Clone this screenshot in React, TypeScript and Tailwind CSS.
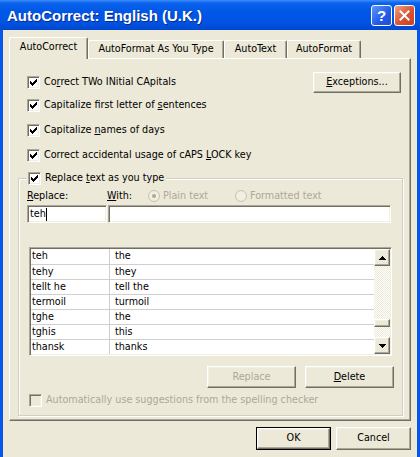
import React from 'react';

// classic 3D edges on the XP beige scheme
const raised =
  'border border-t-white border-l-white border-r-[#716F64] border-b-[#716F64] shadow-[inset_-1px_-1px_0_#ACA899,inset_1px_1px_0_#F1EFE2] bg-[#ECE9D8]';
const sunken =
  'border border-t-[#ACA899] border-l-[#ACA899] border-r-white border-b-white shadow-[inset_1px_1px_0_#716F64,inset_-1px_-1px_0_#F1EFE2]';

const Check: React.FC<{ checked?: boolean; disabled?: boolean }> = ({ checked = true, disabled = false }) => (
  <span className={`w-[13px] h-[13px] shrink-0 flex items-center justify-center ${sunken} ${disabled ? 'bg-[#ECE9D8]' : 'bg-white'}`}>
    {checked && (
      <svg width="7" height="7" viewBox="0 0 7 7" shapeRendering="crispEdges">
        <path
          d="M0 2h1v3H0z M1 3h1v3H1z M2 4h1v3H2z M3 3h1v3H3z M4 2h1v3H4z M5 1h1v3H5z M6 0h1v3H6z"
          fill={disabled ? '#ACA899' : '#000'}
        />
      </svg>
    )}
  </span>
);

const Radio: React.FC<{ on?: boolean }> = ({ on = false }) => (
  <span className="w-[12px] h-[12px] shrink-0 rounded-full border border-[#C5C2B2] bg-[#F1EFE2] flex items-center justify-center">
    {on && <span className="w-[4px] h-[4px] rounded-full bg-[#ACA899]" />}
  </span>
);

const U: React.FC<{ children: React.ReactNode }> = ({ children }) => <span className="underline">{children}</span>;

const rows: [string, string][] = [
  ['teh', 'the'],
  ['tehy', 'they'],
  ['tellt he', 'tell the'],
  ['termoil', 'turmoil'],
  ['tghe', 'the'],
  ['tghis', 'this'],
  ['thansk', 'thanks'],
];

const Arrow: React.FC<{ up?: boolean }> = ({ up }) => (
  <svg width="7" height="4" viewBox="0 0 7 4" shapeRendering="crispEdges">
    <path d={up ? 'M3 0h1v1H3z M2 1h3v1H2z M1 2h5v1H1z M0 3h7v1H0z' : 'M0 0h7v1H0z M1 1h5v1H1z M2 2h3v1H2z M3 3h1v1H3z'} fill="#000" />
  </svg>
);

const CheckRow: React.FC<{ children: React.ReactNode; h: string }> = ({ children, h }) => (
  <div className={`flex items-center gap-[4px] pl-[17px] ${h}`}>
    <Check />
    <span>{children}</span>
  </div>
);

const App: React.FC = () => {
  return (
    <div className="w-[420px] h-[457px] flex flex-col bg-[#0758EA] font-['DejaVu_Sans_Condensed','Liberation_Sans',Arial,sans-serif] text-[10.7px] leading-none text-black select-none">
      {/* Title bar */}
      <div className="h-[30px] shrink-0 flex items-center pl-[7px] pr-[5px] bg-[linear-gradient(to_bottom,#3D8EFB_0px,#0B62EC_3px,#0057E7_12px,#0054E3_22px,#0047D0_30px)]">
        <span className="flex-1 text-white font-bold text-[15px] font-['Liberation_Sans',Arial,sans-serif] [text-shadow:1px_1px_0_#0A2A8C]">
          AutoCorrect: English (U.K.)
        </span>
        <div className="flex gap-[2px]">
          <div className="w-[21px] h-[21px] rounded-[3px] border border-white bg-[linear-gradient(135deg,#5E97FA,#2359E6_60%,#1B4FD8)] flex items-center justify-center text-white font-bold text-[15px] font-['Liberation_Sans',Arial,sans-serif]">
            ?
          </div>
          <div className="w-[21px] h-[21px] rounded-[3px] border border-white bg-[linear-gradient(135deg,#F0A088,#DB5230_55%,#C9401F)] flex items-center justify-center">
            <svg width="11" height="11" viewBox="0 0 11 11">
              <path d="M1.5 1.5l8 8M9.5 1.5l-8 8" stroke="#fff" strokeWidth="2" strokeLinecap="square" />
            </svg>
          </div>
        </div>
      </div>

      {/* Body */}
      <div className="flex-1 mx-[3px] bg-[#ECE9D8] flex flex-col">
        {/* Tabs */}
        <div className="flex items-end h-[28px] pt-[7px] pl-[6px]">
          <div className="relative z-10 w-[79px] h-[22px] -mb-px bg-[#ECE9D8] border-t border-l border-r border-t-white border-l-white border-r-[#716F64] rounded-t-[2px] shadow-[inset_-1px_0_0_#ACA899] flex items-center justify-center pb-[2px]">
            AutoCorrect
          </div>
          <div className="w-[136px] h-[18px] border-t border-l border-r border-t-white border-l-white border-r-[#716F64] rounded-t-[2px] shadow-[inset_-1px_0_0_#ACA899] flex items-center justify-center">
            AutoFormat As You Type
          </div>
          <div className="w-[63px] h-[18px] border-t border-l border-r border-t-white border-l-white border-r-[#716F64] rounded-t-[2px] shadow-[inset_-1px_0_0_#ACA899] flex items-center justify-center">
            AutoText
          </div>
          <div className="w-[74px] h-[18px] border-t border-l border-r border-t-white border-l-white border-r-[#716F64] rounded-t-[2px] shadow-[inset_-1px_0_0_#ACA899] flex items-center justify-center">
            AutoFormat
          </div>
        </div>

        {/* Tab panel */}
        <div className="ml-[6px] w-[402px] h-[363px] border border-t-white border-l-white border-r-[#716F64] border-b-[#716F64] shadow-[inset_-1px_-1px_0_#ACA899] flex flex-col pt-[13px]">
          <div className="flex items-center justify-between h-[21px] pl-[17px] pr-[9px]">
            <div className="flex items-center gap-[4px]">
              <Check />
              <span>
                Co<U>r</U>rect TWo INitial CApitals
              </span>
            </div>
            <button className={`w-[88px] h-[21px] ${raised} flex items-center justify-center`}>
              <span>
                <U>E</U>xceptions...
              </span>
            </button>
          </div>
          <CheckRow h="h-[25px]">
            Capitalize first letter of <U>s</U>entences
          </CheckRow>
          <CheckRow h="h-[25px]">
            Capitalize <U>n</U>ames of days
          </CheckRow>
          <CheckRow h="h-[24px]">
            Correct accidental usage of cAPS <U>L</U>OCK key
          </CheckRow>

          {/* Replace group */}
          <fieldset className="mt-[4px] ml-[8px] w-[385px] border border-[#D0D0BF] shadow-[1px_1px_0_#fff,inset_1px_1px_0_#fff] px-[8px] pb-[7px]">
            <legend className="h-[14px] pl-[1px] pr-[2px] bg-[#ECE9D8] flex items-center gap-[4px]">
              <Check />
              <span>
                Replace <U>t</U>ext as you type
              </span>
            </legend>

            <div className="flex items-center h-[14px] mt-[4px]">
              <span className="w-[80px]">
                <U>R</U>eplace:
              </span>
              <span className="w-[41px]">
                <U>W</U>ith:
              </span>
              <span className="w-[87px] flex items-center gap-[3px] text-[#ACA899]">
                <Radio on />
                Plain text
              </span>
              <span className="flex items-center gap-[3px] text-[#ACA899]">
                <Radio />
                Formatted text
              </span>
            </div>

            <div className="flex gap-[1px] mt-[2px] h-[18px]">
              <div className={`w-[80px] h-full bg-white ${sunken} flex items-center pl-[2px]`}>
                teh<span className="w-px h-[13px] bg-black" />
              </div>
              <div className={`w-[283px] h-full bg-white ${sunken}`} />
            </div>

            {/* List */}
            <div className={`mt-[24px] ml-[2px] w-[363px] h-[109px] bg-white ${sunken} flex p-px`}>
              <div className="flex-1 flex flex-col">
                {rows.map(([a, b], i) => (
                  <div key={i} className={`flex h-[15px] ${i > 0 ? 'border-t border-[#CFCFCF]' : ''}`}>
                    <span className="w-[79px] pl-[1px] flex items-center border-r border-[#CFCFCF]">{a}</span>
                    <span className="flex-1 pl-[5px] flex items-center">{b}</span>
                  </div>
                ))}
              </div>
              <div className="w-[16px] flex flex-col">
                <div className={`h-[17px] ${raised} flex items-center justify-center`}>
                  <Arrow up />
                </div>
                <div className="h-[53px] bg-[repeating-conic-gradient(#ffffff_0%_25%,#ECE9D8_0%_50%)] bg-[length:2px_2px]" />
                <div className={`h-[8px] ${raised}`} />
                <div className="flex-1 bg-[repeating-conic-gradient(#ffffff_0%_25%,#ECE9D8_0%_50%)] bg-[length:2px_2px]" />
                <div className={`h-[17px] ${raised} flex items-center justify-center`}>
                  <Arrow />
                </div>
              </div>
            </div>

            <div className="flex justify-end gap-[9px] mt-[10px]">
              <button className={`w-[89px] h-[22px] ${raised} text-[#ACA899] flex items-center justify-center`}>Replace</button>
              <button className={`w-[89px] h-[22px] ${raised} flex items-center justify-center`}>
                <span>
                  <U>D</U>elete
                </span>
              </button>
            </div>

            <div className="flex items-center gap-[4px] h-[15px] mt-[5px] pl-[2px] text-[#ACA899]">
              <Check checked={false} disabled />
              <span>Automatically use suggestions from the spelling checker</span>
            </div>
          </fieldset>
        </div>

        {/* Dialog buttons */}
        <div className="flex justify-end gap-[5px] mt-[6px] pr-[6px]">
          <div className="w-[75px] h-[23px] border border-black flex">
            <button className={`flex-1 ${raised} flex items-center justify-center`}>OK</button>
          </div>
          <button className={`w-[75px] h-[23px] ${raised} flex items-center justify-center`}>Cancel</button>
        </div>
      </div>
    </div>
  );
};

export default App;
